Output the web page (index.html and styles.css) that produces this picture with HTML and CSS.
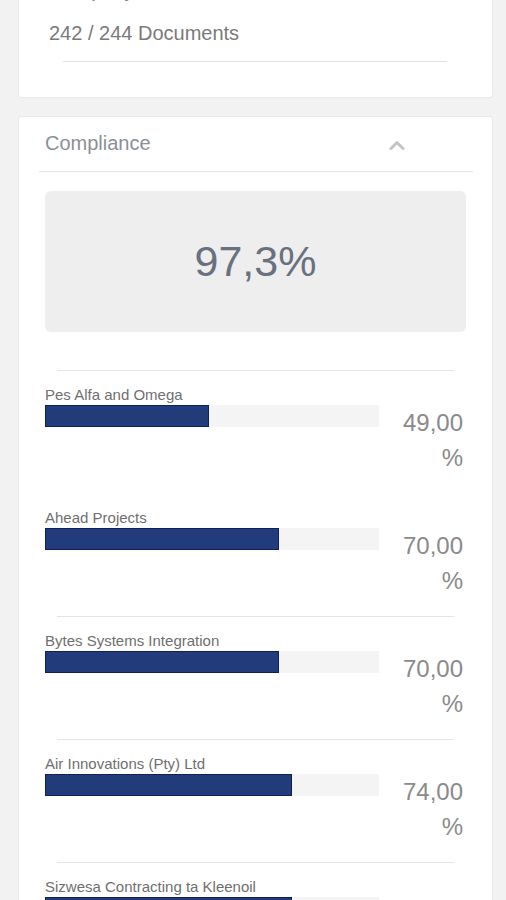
FILE: index.html
```html
<!DOCTYPE html>
<html lang="en">
<head>
<meta charset="utf-8">
<title>Compliance</title>
<link rel="stylesheet" href="styles.css">
</head>
<body>
<div class="viewport">
  <section class="card card--docs">
    <div class="card-kicker">Company</div>
    <div class="card-value">242 / 244 Documents</div>
    <div class="card-rule"></div>
  </section>

  <section class="card card--compliance">
    <header class="card-header">
      <span class="card-title">Compliance</span>
      <svg class="chevron" width="16" height="10" viewBox="0 0 16 10" aria-hidden="true">
        <polyline points="2,8.5 8,2.5 14,8.5" fill="none" stroke="#c4c4c4" stroke-width="3" stroke-linecap="round" stroke-linejoin="round"/>
      </svg>
    </header>
    <div class="card-body">
      <div class="score">97,3%</div>

      <div class="divider"></div>
      <div class="row">
        <div class="row-label">Pes Alfa and Omega</div>
        <div class="row-main">
          <div class="bar"><div class="bar-fill" style="width:49%"></div></div>
          <div class="pct">49,00 %</div>
        </div>
      </div>

      <div class="divider divider--hidden"></div>
      <div class="row">
        <div class="row-label">Ahead Projects</div>
        <div class="row-main">
          <div class="bar"><div class="bar-fill" style="width:70%"></div></div>
          <div class="pct">70,00 %</div>
        </div>
      </div>

      <div class="divider"></div>
      <div class="row">
        <div class="row-label">Bytes Systems Integration</div>
        <div class="row-main">
          <div class="bar"><div class="bar-fill" style="width:70%"></div></div>
          <div class="pct">70,00 %</div>
        </div>
      </div>

      <div class="divider"></div>
      <div class="row">
        <div class="row-label">Air Innovations (Pty) Ltd</div>
        <div class="row-main">
          <div class="bar"><div class="bar-fill" style="width:74%"></div></div>
          <div class="pct">74,00 %</div>
        </div>
      </div>

      <div class="divider"></div>
      <div class="row">
        <div class="row-label">Sizwesa Contracting ta Kleenoil</div>
        <div class="row-main">
          <div class="bar"><div class="bar-fill" style="width:74%"></div></div>
          <div class="pct">74,00 %</div>
        </div>
      </div>
    </div>
  </section>
</div>
</body>
</html>
```

FILE: styles.css
```css
html, body {
  margin: 0;
  padding: 0;
}

body {
  background: #f2f2f2;
  font-family: "Liberation Sans", Arial, sans-serif;
  color: #777777;
}

.viewport {
  height: 100vh;
  overflow: hidden;
}

.card {
  background: #ffffff;
  border: 1px solid #e8e8e8;
  border-radius: 3px;
  margin: 0 13px 0 18px;
}

.card--docs {
  margin-top: -31px;
  padding: 8px 0 35px 30px;
}

.card-kicker,
.card-value {
  font-size: 20px;
  line-height: 24px;
  color: #7a7a7a;
}

.card-value {
  margin-top: 19px;
}

.card-rule {
  margin: 16px 0 0 14px;
  width: 384px;
  height: 1px;
  background: #e2e2e2;
}

.card--compliance {
  margin-top: 18px;
}

.card-header {
  display: flex;
  align-items: center;
  justify-content: space-between;
  margin: 0 19px 0 20px;
  padding: 14px 0 16px 6px;
  border-bottom: 1px solid #e4e4e4;
}

.card-title {
  font-size: 20px;
  line-height: 24px;
  color: #8b8f96;
}

.chevron {
  display: block;
  margin-right: 68px;
  margin-top: 3px;
}

.card-body {
  padding: 19px 26px 0 26px;
}

.score {
  height: 141px;
  border-radius: 6px;
  background: #eeeeee;
  display: flex;
  align-items: center;
  justify-content: center;
  font-size: 43px;
  color: #6a717e;
}

.divider {
  margin: 0 12px;
  height: 1px;
  background: #e4e4e4;
}

.score + .divider {
  margin-top: 38px;
}

.divider--hidden {
  background: transparent;
}

.row {
  padding: 14px 0 18px;
}

.row-label {
  font-size: 15px;
  line-height: 19px;
  color: #6f6f6f;
  margin-bottom: 1px;
}

.row-main {
  display: flex;
  align-items: flex-start;
  justify-content: space-between;
}

.bar {
  width: 334px;
  height: 22px;
  background: #f4f4f4;
}

.bar-fill {
  box-sizing: border-box;
  height: 100%;
  background: #213b7b;
  border: 1px solid #0f1f57;
}

.pct {
  width: 68px;
  padding-right: 3px;
  text-align: right;
  font-size: 24px;
  line-height: 35px;
  color: #8a8a8a;
}
```
